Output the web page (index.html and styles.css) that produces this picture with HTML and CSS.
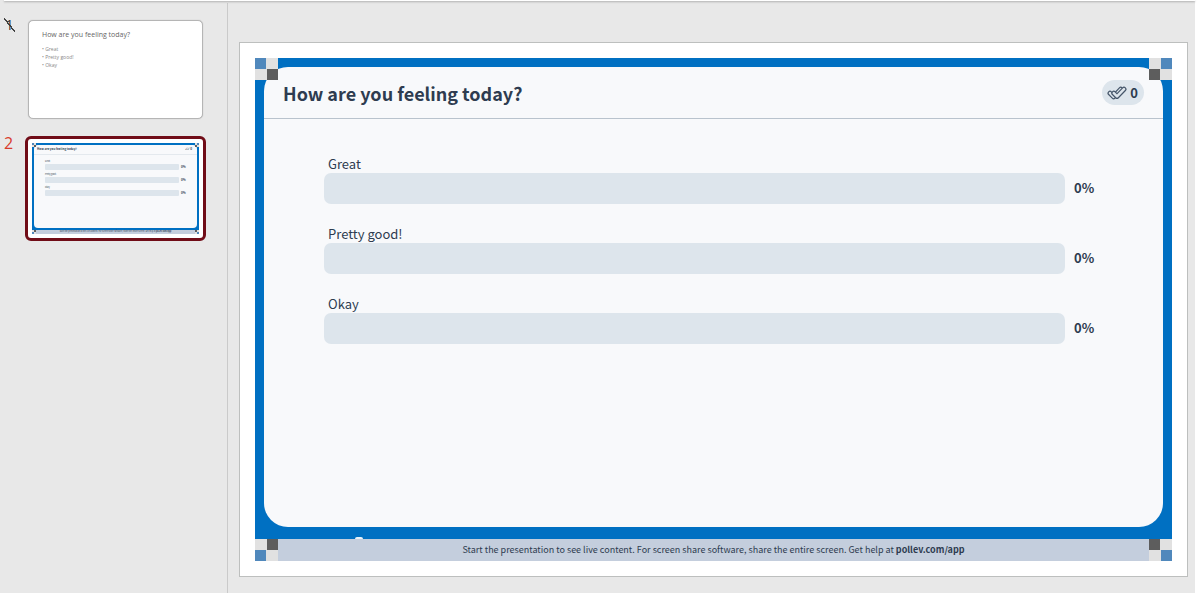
FILE: index.html
```html
<!DOCTYPE html>
<html lang="en">
<head>
  <meta charset="UTF-8">
  <meta name="viewport" content="width=device-width, initial-scale=1.0">
  <title>How are you feeling today?</title>
  <link rel="stylesheet" href="styles.css">
</head>
<body>
  <div class="app">
    <div class="ribbon-edge"></div>

    <!-- Slide list -->
    <nav class="sidebar">
      <div class="thumb-row">
        <span class="thumb-number hidden-slide">1</span>
        <button class="thumb thumb-text">
          <span class="mini-heading">How are you feeling today?</span>
          <span class="mini-bullet">• Great</span>
          <span class="mini-bullet">• Pretty good!</span>
          <span class="mini-bullet">• Okay</span>
        </button>
      </div>
      <div class="thumb-row">
        <span class="thumb-number current">2</span>
        <button class="thumb thumb-poll">
          <span class="mini-frame">
            <span class="mini-panel">
              <span class="mini-header">How are you feeling today?<span class="mini-count">✓✓ 0</span></span>
              <span class="mini-results">
                <span class="mini-label">Great</span>
                <span class="mini-bar"></span><span class="mini-percent">0%</span>
                <span class="mini-label">Pretty good!</span>
                <span class="mini-bar"></span><span class="mini-percent">0%</span>
                <span class="mini-label">Okay</span>
                <span class="mini-bar"></span><span class="mini-percent">0%</span>
              </span>
            </span>
            <span class="mini-footer">Start the presentation to see live content. For screen share software, share the entire screen. Get help at <b>pollev.com/app</b></span>
            <span class="checker mini top-left"></span>
            <span class="checker mini top-right"></span>
            <span class="checker mini bottom-left"></span>
            <span class="checker mini bottom-right"></span>
          </span>
        </button>
      </div>
    </nav>

    <!-- Current slide -->
    <main class="stage">
      <section class="slide">
        <div class="poll">
          <div class="panel">
            <header class="panel-header">
              <h1>How are you feeling today?</h1>
              <div class="count">
                <svg class="checks" viewBox="0 0 20 14" width="20" height="14" fill="none" stroke-linejoin="round" stroke-linecap="round">
                  <path d="M3 7.2 L6.6 10.8 L13.8 3.2" stroke="#46566a" stroke-width="5"/>
                  <path d="M3 7.2 L6.6 10.8 L13.8 3.2" stroke="#dde5ec" stroke-width="2.6"/>
                  <path d="M6.8 7.2 L10 10.4 L17 3.2" stroke="#46566a" stroke-width="5"/>
                  <path d="M6.8 7.2 L10 10.4 L17 3.2" stroke="#dde5ec" stroke-width="2.6"/>
                </svg>
                <span>0</span>
              </div>
            </header>
            <div class="results">
              <div class="result">
                <span class="label">Great</span>
                <div class="bar"></div>
                <span class="percent">0%</span>
              </div>
              <div class="result">
                <span class="label">Pretty good!</span>
                <div class="bar"></div>
                <span class="percent">0%</span>
              </div>
              <div class="result">
                <span class="label">Okay</span>
                <div class="bar"></div>
                <span class="percent">0%</span>
              </div>
            </div>
          </div>
          <span class="logo-tip"></span>
          <footer class="poll-footer">Start the presentation to see live content. For screen share software, share the entire screen. Get help at <b>pollev.com/app</b></footer>
          <span class="checker top-left"></span>
          <span class="checker top-right"></span>
          <span class="checker bottom-left"></span>
          <span class="checker bottom-right"></span>
        </div>
      </section>
    </main>
  </div>
</body>
</html>
```
FILE: styles.css
```css
* {
  box-sizing: border-box;
}
body {
  margin: 0;
  padding-right: 7px;
  background: #fff;
  color: #2e3c50;
  font-family: "Noto Sans CJK SC", "Open Sans", sans-serif;
}
h1 {
  margin: 0;
}
.app {
  position: relative;
  display: grid;
  grid-template-columns: 228px 1fr;
  min-height: 100vh;
  background: #e8e8e8;
}
/* Bottom edge of the ribbon above the editor */
.ribbon-edge {
  position: absolute;
  top: 0;
  left: 4px;
  right: 0;
  height: 1px;
  background: #fff;
  box-shadow: 0 1px 2px #999;
}

/* Sidebar */
.sidebar {
  display: flex;
  flex-direction: column;
  gap: 17px;
  margin-top: 3px;
  padding: 17px 21px 0 4px;
  border-right: 1px solid #cacaca;
}
.thumb-row {
  display: grid;
  grid-template-columns: 21px 1fr;
  align-items: start;
}
.thumb-number {
  font: 16px/20px "Open Sans", sans-serif;
  color: #333;
}
.hidden-slide {
  width: 11px;
  height: 14px;
  margin-top: -2px;
  font-size: 14px;
  line-height: 14px;
  text-align: center;
  background: linear-gradient(to top right, transparent 46%, #444 46%, #444 54%, transparent 54%);
}
.current {
  margin-top: -3px;
  color: #d83b2b;
}
.thumb {
  display: flex;
  flex-direction: column;
  background: #fff;
  text-align: left;
  cursor: pointer;
}
.thumb-text {
  height: 99px;
  margin: 0 3px;
  padding: 9px 13px;
  border: 1px solid #b5b5b5;
  border-radius: 5px;
  box-shadow: 0 0 1px #aaa;
  font-family: "Open Sans", sans-serif;
  color: #888;
}
.mini-heading {
  margin-bottom: 5px;
  font-size: 7px;
  line-height: 10px;
  color: #666;
}
.mini-bullet {
  font-size: 5px;
  line-height: 8px;
}
.thumb-poll {
  height: 105px;
  padding: 4px;
  border: 3px solid #700c17;
  border-radius: 6px;
  font-family: inherit;
  color: inherit;
}
.mini-frame {
  position: relative;
  display: flex;
  flex-direction: column;
  width: 100%;
  height: 100%;
  padding: 2px 2px 0;
  background: #0070c2;
}
.mini-panel {
  flex: 1;
  margin-bottom: 2px;
  background: #f8f9fb;
  border-radius: 4px;
}
.mini-header {
  display: flex;
  justify-content: space-between;
  padding: 0 4px 0 3px;
  border-bottom: 1px solid #e4e9ee;
  font-size: 3px;
  line-height: 9px;
  font-weight: bold;
}
.mini-count {
  padding: 0 1px;
}
.mini-results {
  display: grid;
  grid-template-columns: 1fr 8px;
  column-gap: 2px;
  padding: 2px 8px 0 11px;
}
.mini-label {
  grid-column: 1 / 3;
  margin-top: 2px;
  font-size: 2px;
  line-height: 5px;
}
.mini-bar {
  height: 6px;
  border-radius: 1px;
  background: #dde5ec;
}
.mini-percent {
  font-size: 3px;
  line-height: 6px;
  font-weight: bold;
}
.mini-footer {
  height: 4px;
  margin: 0 -2px;
  font-size: 2px;
  line-height: 4px;
  text-align: center;
  background: #c4cedd;
}

/* Slide */
.stage {
  display: flex;
  padding: 42px 7px 16px 11px;
}
.slide {
  display: flex;
  flex: 1;
  padding: 15px;
  border: 1px solid #bdbfbe;
  background: #fff;
}
.poll {
  position: relative;
  display: flex;
  flex: 1;
  flex-direction: column;
  padding: 9px 9px 0;
  background: #0070c2;
}
.panel {
  flex: 1;
  margin-bottom: 12px;
  border-radius: 24px;
  background: #f8f9fb;
}
.panel-header {
  display: flex;
  align-items: center;
  justify-content: space-between;
  height: 52px;
  padding: 0 19px;
  border-bottom: 1px solid #b9c3cd;
}
.panel-header h1 {
  font-size: 18px;
  line-height: 28px;
  font-weight: bold;
}
.count {
  display: flex;
  align-items: center;
  gap: 3px;
  height: 25px;
  padding: 0 6px 0 5px;
  border-radius: 13px;
  background: #dde5ec;
  font-size: 13px;
  line-height: 20px;
  font-weight: bold;
}
.results {
  display: flex;
  flex-direction: column;
  gap: 21px;
  padding: 36px 60px;
}
.result {
  display: grid;
  grid-template-columns: 1fr 29px;
  column-gap: 9px;
}
.label {
  grid-column: 1 / 3;
  padding-left: 4px;
  font-size: 13px;
  line-height: 18px;
}
.bar {
  height: 31px;
  border-radius: 7px;
  background: #dde5ec;
}
.percent {
  font-size: 13px;
  line-height: 30px;
  font-weight: bold;
}
.poll-footer {
  height: 22px;
  margin: 0 -9px;
  background: #c4cedd;
  font-size: 9px;
  line-height: 22px;
  text-align: center;
}
/* Top of the logo that shows above the footer */
.logo-tip {
  position: absolute;
  left: 100px;
  bottom: 22px;
  width: 8px;
  height: 2px;
  border-radius: 8px 8px 0 0;
  background: #e8f2f9;
}

/* Corner markers */
.checker {
  position: absolute;
  width: 23px;
  height: 22px;
  background: conic-gradient(#e1e1e1 25%, #5d5d5d 25% 50%, #e1e1e1 50% 75%, #5088bc 75%);
}
.checker.mini {
  width: 4px;
  height: 4px;
}
.top-left {
  top: 0;
  left: 0;
}
.top-right {
  top: 0;
  right: 0;
  transform: scaleX(-1);
}
.bottom-left {
  bottom: 0;
  left: 0;
  transform: scaleY(-1);
}
.bottom-right {
  right: 0;
  bottom: 0;
  transform: scale(-1);
}
```
